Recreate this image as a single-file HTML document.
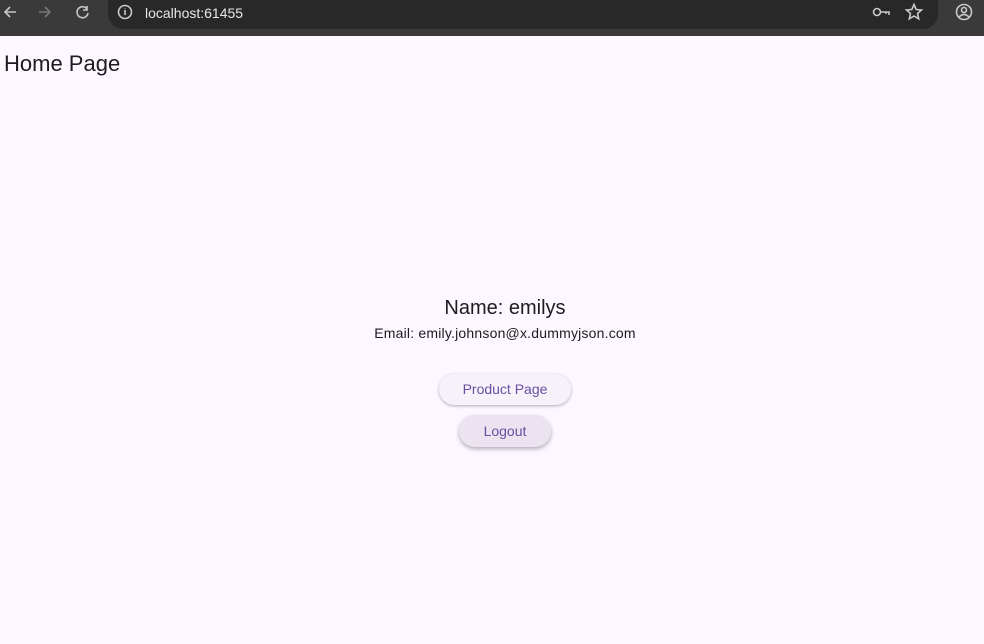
<!DOCTYPE html>
<html><head><style>
body{margin:0;width:984px;height:644px;background:#fdf7ff;font-family:"Liberation Sans",sans-serif;position:relative;overflow:hidden}
.bar{position:absolute;left:0;top:0;width:984px;height:36px;background:#3a3a3a}
.omni{position:absolute;left:108px;top:0;width:830px;height:29px;background:#282828;border-radius:0 0 15px 15px}
.url{position:absolute;left:145px;top:5px;color:#e8e8e8;font-size:14px}
.t{position:absolute;color:#1d1b20}
.btn{position:absolute;border-radius:16px;color:#6750a4;font-size:14px;text-align:center;box-shadow:0 1px 3px rgba(0,0,0,.3)}
</style></head><body>
<div class="bar"></div>
<div class="omni"></div>
<svg style="position:absolute;left:0;top:0" width="984" height="30">
<g stroke="#c8c8c8" stroke-width="1.6" fill="none">
<path d="M16 12H5M10 7L5 12L10 17"/>
<path d="M39 12H50M45 7L50 12L45 17" stroke="#777"/>
<path d="M87 9A5.5 5.5 0 1 0 88 13M87 6V10H83"/>
<circle cx="125" cy="12" r="6.5"/><path d="M125 10V15M125 8V8.5"/>
<circle cx="877" cy="12" r="3.5"/><path d="M880.5 12H889V15M886 12V14"/>
<path d="M914 4.5L916.2 9.5L921.5 10L917.5 13.5L918.7 18.8L914 16L909.3 18.8L910.5 13.5L906.5 10L911.8 9.5Z"/>
<circle cx="964" cy="12" r="7.5"/><circle cx="964" cy="10" r="2.5"/><path d="M959 17Q964 12 969 17"/>
</g></svg>
<div class="url">localhost:61455</div>
<div class="t" style="left:4px;top:51px;font-size:22px">Home Page</div>
<div class="t" style="left:0;width:1010px;text-align:center;top:297px;font-size:20px">Name: emilys</div>
<div class="t" style="left:0;width:1010px;text-align:center;top:325px;font-size:14px;letter-spacing:.2px">Email: emily.johnson@x.dummyjson.com</div>
<div class="btn" style="left:439px;top:374px;width:132px;height:31px;line-height:31px;background:#f7f1f9">Product Page</div>
<div class="btn" style="left:459px;top:415px;width:92px;height:32px;line-height:32px;background:#ebe4f0;box-shadow:0 2px 4px rgba(0,0,0,.3)">Logout</div>
</body></html>
